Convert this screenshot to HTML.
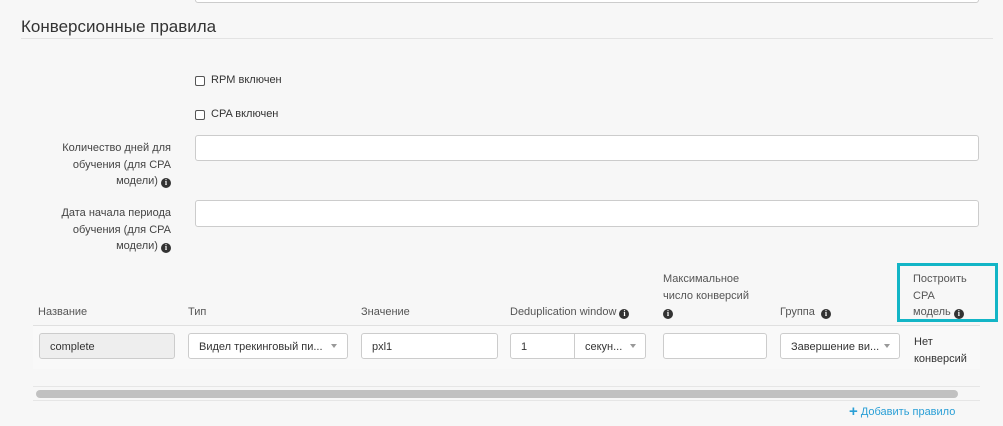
<!DOCTYPE html>
<html><head><meta charset="utf-8"><style>
*{box-sizing:border-box;margin:0;padding:0}
body{width:1003px;height:426px;background:#f7f7f7;font-family:"Liberation Sans",sans-serif;color:#333;position:relative;overflow:hidden;font-size:11px}
.a{position:absolute}
.inp{position:absolute;background:#fff;border:1px solid #ccc;border-radius:3px}
.lbl{position:absolute;text-align:right;width:136px;left:35px;font-size:11px;line-height:16.5px;color:#444}
.i{display:inline-block;width:10px;height:10px;border-radius:50%;background:#333;color:#fff;font-size:8px;line-height:10px;text-align:center;font-weight:bold;font-family:"Liberation Serif",serif;vertical-align:-1px}
.cb{position:absolute;width:10px;height:10px;border:1px solid #555;border-radius:2px;background:#fff}
.h{position:absolute;font-size:11px;color:#555;line-height:16.5px}
.t{position:absolute;font-size:11px;color:#333}
.car{position:absolute;width:0;height:0;border-left:3.5px solid transparent;border-right:3.5px solid transparent;border-top:4px solid #999}
</style></head><body>
<div class="inp" style="left:195px;top:-10px;width:784px;height:13px"></div>
<div class="a" style="left:21px;top:17px;font-size:17px;color:#333">Конверсионные правила</div>
<div class="a" style="left:21px;top:38px;width:972px;height:1px;background:#e3e3e3"></div>

<div class="cb" style="left:195px;top:76px"></div>
<div class="t" style="left:211px;top:74px">RPM включен</div>
<div class="cb" style="left:195px;top:110px"></div>
<div class="t" style="left:211px;top:108px">CPA включен</div>

<div class="lbl" style="top:140px">Количество дней для обучения (для CPA модели) <span class="i">i</span></div>
<div class="inp" style="left:195px;top:135px;width:784px;height:26px"></div>
<div class="lbl" style="top:205px">Дата начала периода обучения (для CPA модели) <span class="i">i</span></div>
<div class="inp" style="left:195px;top:200px;width:784px;height:27px"></div>

<div class="h" style="left:38px;top:304px">Название</div>
<div class="h" style="left:188px;top:304px">Тип</div>
<div class="h" style="left:361px;top:304px">Значение</div>
<div class="h" style="left:510px;top:304px">Deduplication window <span class="i">i</span></div>
<div class="h" style="left:663px;top:271px">Максимальное<br>число конверсий<br><span class="i">i</span></div>
<div class="h" style="left:780px;top:304px">Группа &nbsp;<span class="i">i</span></div>
<div class="h" style="left:913px;top:271px">Построить<br>CPA<br>модель <span class="i">i</span></div>
<div class="a" style="left:897px;top:263px;width:101px;height:59px;border:3px solid #13b5c6"></div>

<div class="a" style="left:33px;top:325px;width:947px;height:1px;background:#e0e0e0"></div>
<div class="a" style="left:33px;top:326px;width:947px;height:43px;background:#f9f9f9"></div>

<div class="inp" style="left:39px;top:333px;width:136px;height:26px;background:#eee"></div>
<div class="t" style="left:50px;top:341px">complete</div>
<div class="inp" style="left:188px;top:333px;width:160px;height:26px"></div>
<div class="t" style="left:199px;top:341px">Видел трекинговый пи...</div>
<div class="car" style="left:331px;top:344px"></div>
<div class="inp" style="left:361px;top:333px;width:137px;height:26px"></div>
<div class="t" style="left:372px;top:341px">pxl1</div>
<div class="inp" style="left:510px;top:333px;width:136px;height:26px"></div>
<div class="a" style="left:574px;top:333px;width:1px;height:26px;background:#ccc"></div>
<div class="t" style="left:521px;top:341px">1</div>
<div class="t" style="left:585px;top:341px">секун...</div>
<div class="car" style="left:630px;top:344px"></div>
<div class="inp" style="left:663px;top:333px;width:104px;height:26px"></div>
<div class="inp" style="left:780px;top:333px;width:120px;height:26px"></div>
<div class="t" style="left:791px;top:341px">Завершение ви...</div>
<div class="car" style="left:884px;top:344px"></div>
<div class="t" style="left:914px;top:334px;line-height:17px">Нет<br>конверсий</div>

<div class="a" style="left:33px;top:386px;width:947px;height:1px;background:#e6e6e6"></div>
<div class="a" style="left:36px;top:390px;width:922px;height:8px;border-radius:4px;background:#c1c1c1"></div>
<div class="a" style="left:33px;top:400px;width:947px;height:1px;background:#e6e6e6"></div>

<div class="a" style="left:849px;top:403px;font-size:11px;color:#2a9fd6"><b style="font-size:15px;vertical-align:-1px">+</b> Добавить правило</div>
</body></html>
